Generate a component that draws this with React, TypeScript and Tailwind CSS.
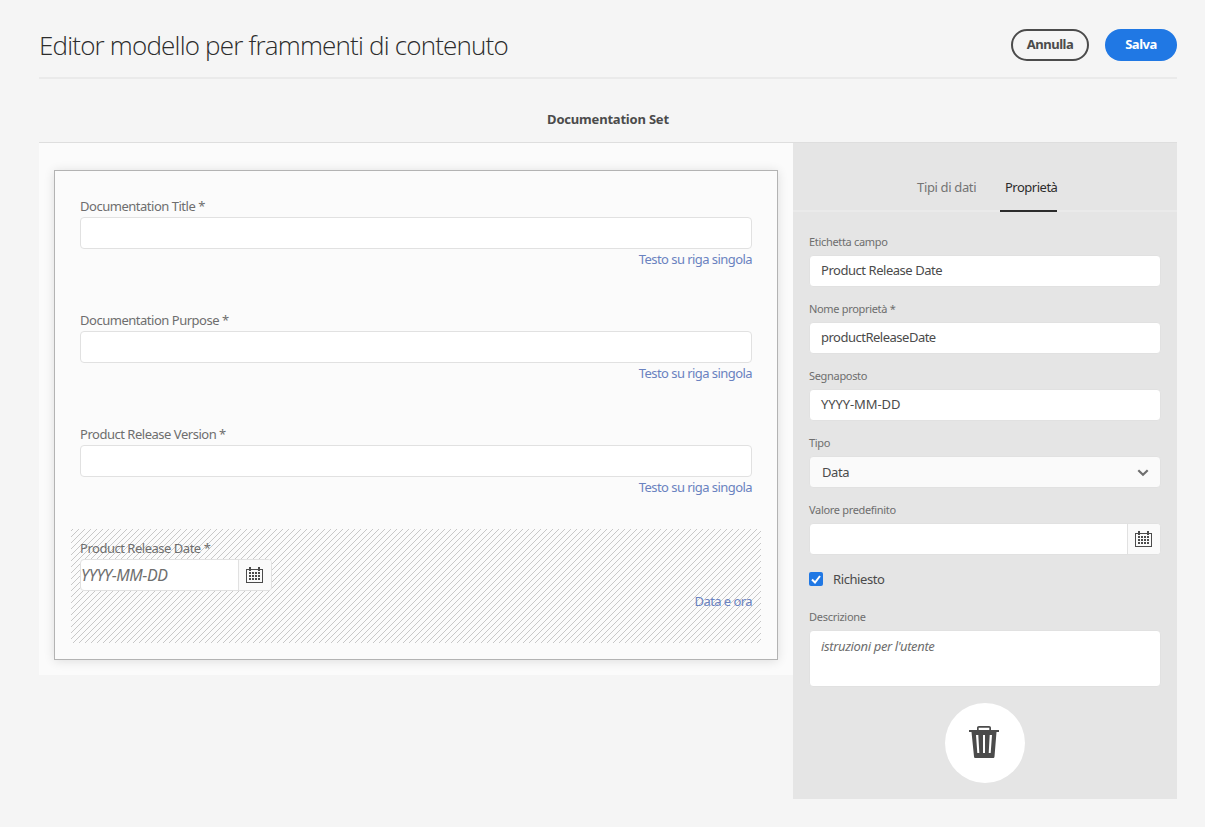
import type { ReactNode } from 'react';

function CalendarIcon() {
  return (
    <svg width="17" height="16" viewBox="0 0 17 16" fill="#4b4b4b" shapeRendering="crispEdges">
      <path d="M0 2h17v14H0zM1 3v12h15V3z" fillRule="evenodd" />
      <path d="M3 0h2v4H3zM12 0h2v4h-2z" />
      {[5, 8, 11].map((y) =>
        [3, 6, 9, 12].map((x) => <rect key={`${x}-${y}`} x={x} y={y} width="2" height="2" />),
      )}
    </svg>
  );
}

function TrashIcon() {
  return (
    <svg width="30" height="32" viewBox="0 0 30 32" fill="#4b4b4b">
      <path d="M8 4V2C8 .7 8.700 0 10 0h10c1.300 0 2 .7 2 2v2h8v2h-2.500l-2 24.500c-.1 1-.7 1.500-1.500 1.500H6.500c-.9 0-1.400-.5-1.500-1.500L2.500 6H0V4zM9.700 4h10.600V1.700H9.700zM7 9l1.300 18h2L9.300 9zM14 9v18h2V9zM20.700 9l-1 18h2L23 9z" fillRule="evenodd" />
    </svg>
  );
}

function Hatch() {
  return (
    <svg className="absolute inset-0" width="690" height="114" shapeRendering="crispEdges">
      <defs>
        <pattern id="hatch" width="6" height="6" patternUnits="userSpaceOnUse">
          {[0, 1, 2, 3, 4, 5].map((i) => (
            <rect key={i} x={(7 - i) % 6} y={i} width="1" height="1" fill="#c8c8c8" />
          ))}
        </pattern>
      </defs>
      <rect width="690" height="114" fill="url(#hatch)" />
    </svg>
  );
}

function TextField({ label }: { label: string }) {
  return (
    <div className="h-[114px] px-[9px] pt-[9px]">
      <div className="h-[21px] text-[13px] leading-5 tracking-[-0.48px] text-[#6e6e6e]">{label}</div>
      <div className="h-8 rounded border border-[#e1e1e1] bg-white" />
      <div className="text-right text-[13px] leading-[21px] tracking-[-0.56px] text-[#6a82c0]">Testo su riga singola</div>
    </div>
  );
}

function Property({ label, children }: { label: string; children: ReactNode }) {
  return (
    <div className="h-[67px]">
      <div className="h-[21px] text-[11px] leading-4 tracking-[-0.32px] text-[#6e6e6e]">{label}</div>
      {children}
    </div>
  );
}

function TextInput({ children }: { children: ReactNode }) {
  return (
    <div className="flex h-8 items-center rounded border border-[#e1e1e1] bg-white px-[11px] pb-px text-[13px] text-[#4b4b4b]">
      {children}
    </div>
  );
}

export default function App() {
  return (
    <div className="h-[827px] w-[1205px] bg-[#f5f5f5] pl-[39px] pr-7 font-['Noto_Sans',sans-serif]">
      <header className="flex h-[79px] items-start justify-between border-b-2 border-[#eaeaea] pt-[29px]">
        <h1 className="font-['Open_Sans',sans-serif] text-[26px] font-light leading-8 tracking-[-0.81px] text-[#2c2c2c]">
          Editor modello per frammenti di contenuto
        </h1>
        <div className="flex gap-4 text-[13px] font-bold tracking-[-0.48px]">
          <button className="h-8 w-[78px] rounded-full border-2 border-[#4b4b4b] pb-px text-[#4b4b4b]">Annulla</button>
          <button className="h-8 w-[72px] rounded-full bg-[#2078e4] pb-px text-white">Salva</button>
        </div>
      </header>
      <div className="h-[63px] pt-[30px] text-center text-[13px] font-bold leading-5 text-[#4b4b4b]">
        <span className="tracking-[-0.2px]">Documentation Set</span>
      </div>
      <main className="flex items-start border-t border-[#dedede]">
        <section className="h-[532px] w-[754px] bg-[#fbfbfb] px-[15px] pt-[27px]">
          <div className="h-[490px] border border-[#b3b3b3] p-4 shadow-[0_1px_10px_rgba(0,0,0,0.12)]">
            <TextField label="Documentation Title *" />
            <TextField label="Documentation Purpose *" />
            <TextField label="Product Release Version *" />
            <div className="relative h-[114px]">
              <Hatch />
              <div className="relative px-[9px] pt-[9px]">
                <div className="h-[21px] text-[13px] leading-5 tracking-[-0.48px] text-[#6e6e6e]">Product Release Date *</div>
                <div className="flex h-8 w-48 overflow-hidden rounded border border-[#e1e1e1] bg-white">
                  <div className="flex-1 text-[16px] italic leading-[30px] text-[#6e6e6e]">
                    <span className="tracking-[-0.45px]">YYYY-MM-DD</span>
                  </div>
                  <div className="flex w-[33px] items-center justify-center border-l border-[#e1e1e1] bg-[#fafafa] pr-px">
                    <CalendarIcon />
                  </div>
                </div>
                <div className="text-right text-[13px] leading-[21px] tracking-[-0.56px] text-[#6a82c0]">Data e ora</div>
              </div>
            </div>
          </div>
        </section>
        <aside className="h-[656px] w-96 bg-[#e5e5e5]">
          <div className="flex h-[69px] border-b-2 border-[#eaeaea] pl-[124px] pt-[34px] text-[13px] leading-5">
            <div className="w-[83px] whitespace-nowrap tracking-[-0.35px] text-[#747474]">Tipi di dati</div>
            <div className="h-[35px] w-[57px] whitespace-nowrap border-b-2 border-[#2c2c2c] pl-[5px] tracking-[-0.5px] text-[#2c2c2c]">Proprietà</div>
          </div>
          <div className="px-4 pt-[22px]">
            <Property label="Etichetta campo"><TextInput><span className="tracking-[-0.46px]">Product Release Date</span></TextInput></Property>
            <Property label="Nome proprietà *"><TextInput><span className="tracking-[-0.5px]">productReleaseDate</span></TextInput></Property>
            <Property label="Segnaposto"><TextInput><span className="tracking-[-0.1px]">YYYY-MM-DD</span></TextInput></Property>
            <Property label="Tipo">
              <div className="flex h-8 items-center justify-between rounded border border-[#e1e1e1] bg-[#fafafa] pl-3 pr-[11px] pt-px text-[13px] tracking-[-0.45px] text-[#4b4b4b]">
                Data
                <svg width="12" height="8" viewBox="0 0 12 8" fill="none" stroke="#6e6e6e" strokeWidth="2.200"><path d="M1.300 1.300 6 5.800l4.700-4.500" /></svg>
              </div>
            </Property>
            <Property label="Valore predefinito">
              <div className="flex h-8 justify-end overflow-hidden rounded border border-[#e1e1e1] bg-white">
                <div className="flex w-[33px] items-center justify-center border-l border-[#e1e1e1] bg-[#fafafa] pr-px"><CalendarIcon /></div>
              </div>
            </Property>
            <div className="flex h-5 items-center gap-2.5 text-[13px] leading-5 tracking-[-0.4px] text-[#4b4b4b]">
              <span className="flex size-3.5 items-center justify-center rounded-xs bg-[#2078e4]">
                <svg width="10" height="9" viewBox="0 0 10 9" fill="none" stroke="white" strokeWidth="2"><path d="M1 4.500 4 7.500 9 1" /></svg>
              </span>
              Richiesto
            </div>
            <div className="pt-5">
              <div className="h-[21px] text-[11px] leading-4 tracking-[-0.28px] text-[#6e6e6e]">Descrizione</div>
              <div className="h-[57px] rounded border border-[#e1e1e1] bg-white px-[11px] pt-[5px] text-[13px] italic leading-5 tracking-[-0.36px] text-[#6e6e6e]">istruzioni per l'utente</div>
            </div>
            <div className="mx-auto mt-4 flex size-20 items-center justify-center rounded-full bg-white pb-[3px] pr-[2px]"><TrashIcon /></div>
          </div>
        </aside>
      </main>
    </div>
  );
}
